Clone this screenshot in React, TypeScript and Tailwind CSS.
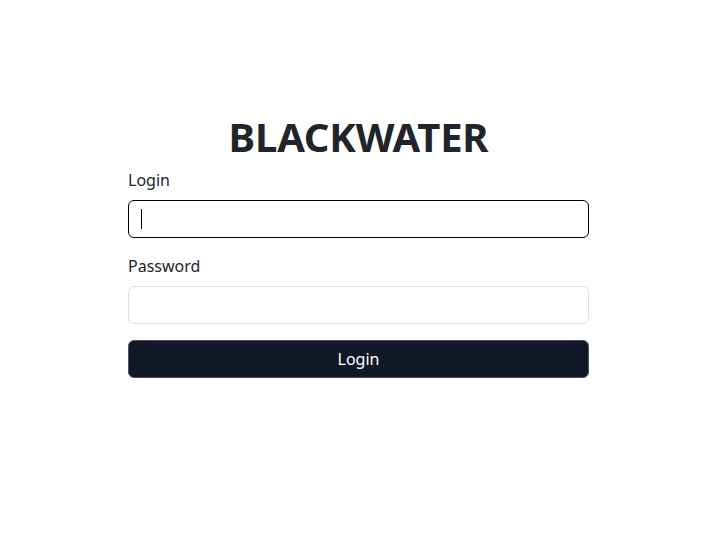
import React from 'react'

export default function App() {
  return (
    <div className="min-h-[534px] bg-white text-[#212529]" style={{ fontFamily: '"Noto Sans", "Open Sans", sans-serif' }}>
      <div className="ml-[128px] w-[461px] pt-[109px]">
        <h1 className="text-center text-[40px] font-bold leading-[56px] tracking-[-0.2px] text-[#212529]">BLACKWATER</h1>
        <form className="mt-[3px]" onSubmit={(e) => e.preventDefault()}>
          <div className="mb-[16px]">
            <label className="block text-[16px] leading-[24px] mb-[8px] text-[#212529]">Login</label>
            <div className="relative">
              <input
                type="text"
                className="block h-[38px] w-full rounded-[6px] border border-black bg-white px-3 text-[16px] outline-none"
              />
              <span className="pointer-events-none absolute left-[13px] top-[9px] h-[20px] w-px bg-black" />
            </div>
          </div>
          <div className="mb-[16px]">
            <label className="block text-[16px] leading-[24px] mb-[8px] text-[#212529]">Password</label>
            <input
              type="password"
              className="block h-[38px] w-full rounded-[6px] border border-[#dee2e6] bg-white px-3 text-[16px] outline-none"
            />
          </div>
          <button
            type="submit"
            className="block h-[38px] w-full rounded-[6px] border border-[#4b5563] bg-[#111827] text-[16px] leading-[24px] text-white"
          >
            Login
          </button>
        </form>
      </div>
    </div>
  )
}
